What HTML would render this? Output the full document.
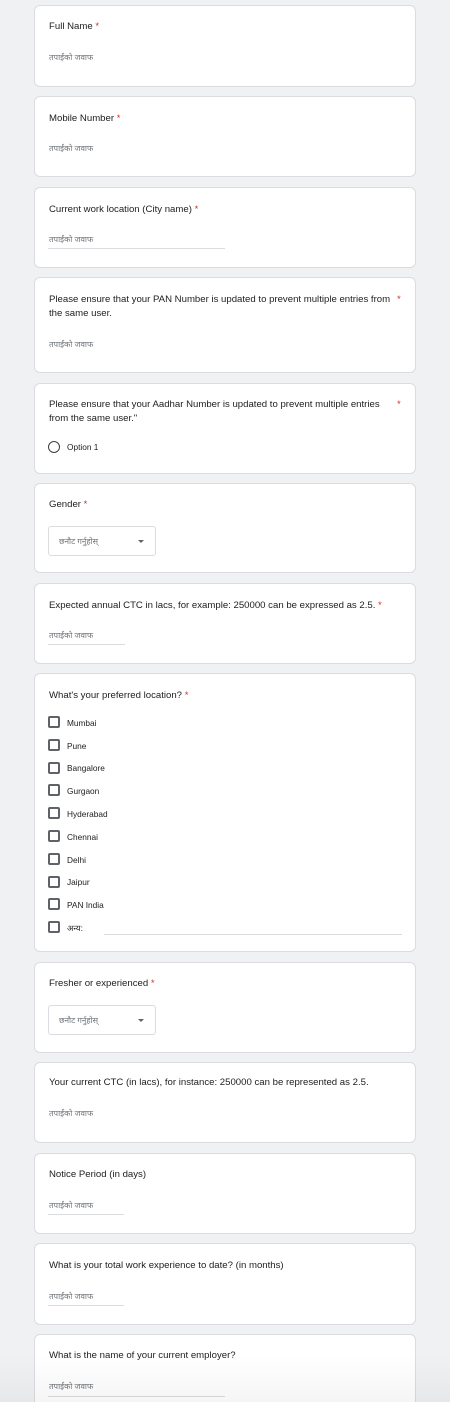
<!DOCTYPE html>
<html style="height:1402px;overflow:hidden"><head><meta charset="utf-8"><style>
*{margin:0;padding:0;box-sizing:border-box}
body{width:450px;height:1402px;background:#f0f1f3;position:relative;overflow:hidden;font-family:"Liberation Sans","Noto Sans CJK SC",sans-serif;color:#202124}
.c{position:absolute;left:34px;width:382px;background:#fff;border:1px solid #dadce0;border-radius:6px}
.t{position:absolute;left:49px;font-size:9.6px;line-height:14px;color:#202124;margin-top:1.5px}
.r{color:#d93025}
.p{position:absolute;left:49px;font-size:8px;color:#70757a;line-height:10px}
.u{position:absolute;left:48px;height:1px;background:#dadce0}
.cb{position:absolute;left:48px;width:12px;height:12px;border:2px solid #5f6368;border-radius:2px}
.o{position:absolute;left:67px;font-size:8.3px;color:#202124;line-height:10px}
.dd{position:absolute;left:48px;width:108px;height:30px;border:1px solid #dadce0;border-radius:3px}
.dd span{position:absolute;left:10px;top:9px;font-size:8px;color:#70757a}
.dd i{position:absolute;left:89px;top:13px;border-left:3px solid transparent;border-right:3px solid transparent;border-top:3px solid #5f6368}
</style></head><body>
<div class="c" style="top:5px;height:82px"></div>
<div class="t" style="top:18px">Full Name <span class="r">*</span></div>
<div class="p" style="top:53px">तपाईंको जवाफ</div>

<div class="c" style="top:96px;height:81px"></div>
<div class="t" style="top:110px">Mobile Number <span class="r">*</span></div>
<div class="p" style="top:144px">तपाईंको जवाफ</div>

<div class="c" style="top:187px;height:81px"></div>
<div class="t" style="top:201px">Current work location (City name) <span class="r">*</span></div>
<div class="p" style="top:235px">तपाईंको जवाफ</div>
<div class="u" style="top:248px;width:177px"></div>

<div class="c" style="top:277px;height:96px"></div>
<div class="t" style="top:291px;width:345px">Please ensure that your PAN Number is updated to prevent multiple entries from the same user.</div>
<div class="t r" style="top:291px;left:397px">*</div>
<div class="p" style="top:340px">तपाईंको जवाफ</div>

<div class="c" style="top:383px;height:91px"></div>
<div class="t" style="top:396px;width:340px">Please ensure that your Aadhar Number is updated to prevent multiple entries from the same user."</div>
<div class="t r" style="top:396px;left:397px">*</div>
<div style="position:absolute;left:48px;top:441px;width:12px;height:12px;border:1.5px solid #3c4043;border-radius:50%"></div>
<div class="o" style="top:442px">Option 1</div>

<div class="c" style="top:483px;height:90px"></div>
<div class="t" style="top:496px">Gender <span class="r">*</span></div>
<div class="dd" style="top:526px"><span>छनौट गर्नुहोस्</span><i></i></div>

<div class="c" style="top:583px;height:81px"></div>
<div class="t" style="top:597px">Expected annual CTC in lacs, for example: 250000 can be expressed as 2.5. <span class="r">*</span></div>
<div class="p" style="top:631px">तपाईंको जवाफ</div>
<div class="u" style="top:644px;width:77px"></div>

<div class="c" style="top:673px;height:279px"></div>
<div class="t" style="top:687px">What's your preferred location? <span class="r">*</span></div>
<div class="cb" style="top:716px"></div><div class="o" style="top:718px">Mumbai</div>
<div class="cb" style="top:739px"></div><div class="o" style="top:741px">Pune</div>
<div class="cb" style="top:762px"></div><div class="o" style="top:763px">Bangalore</div>
<div class="cb" style="top:784px"></div><div class="o" style="top:786px">Gurgaon</div>
<div class="cb" style="top:807px"></div><div class="o" style="top:809px">Hyderabad</div>
<div class="cb" style="top:830px"></div><div class="o" style="top:832px">Chennai</div>
<div class="cb" style="top:853px"></div><div class="o" style="top:855px">Delhi</div>
<div class="cb" style="top:876px"></div><div class="o" style="top:877px">Jaipur</div>
<div class="cb" style="top:898px"></div><div class="o" style="top:900px">PAN India</div>
<div class="cb" style="top:921px"></div><div class="o" style="top:923px">अन्य:</div>
<div class="u" style="top:934px;left:104px;width:298px"></div>

<div class="c" style="top:962px;height:91px"></div>
<div class="t" style="top:975px">Fresher or experienced <span class="r">*</span></div>
<div class="dd" style="top:1005px"><span>छनौट गर्नुहोस्</span><i></i></div>

<div class="c" style="top:1062px;height:81px"></div>
<div class="t" style="top:1074px">Your current CTC (in lacs), for instance: 250000 can be represented as 2.5.</div>
<div class="p" style="top:1109px">तपाईंको जवाफ</div>

<div class="c" style="top:1153px;height:81px"></div>
<div class="t" style="top:1166px">Notice Period (in days)</div>
<div class="p" style="top:1201px">तपाईंको जवाफ</div>
<div class="u" style="top:1214px;width:76px"></div>

<div class="c" style="top:1243px;height:82px"></div>
<div class="t" style="top:1257px">What is your total work experience to date? (in months)</div>
<div class="p" style="top:1292px">तपाईंको जवाफ</div>
<div class="u" style="top:1305px;width:76px"></div>

<div class="c" style="top:1334px;height:68px;border-bottom:none;border-radius:6px 6px 0 0"></div>
<div class="t" style="top:1347px">What is the name of your current employer?</div>
<div class="p" style="top:1382px">तपाईंको जवाफ</div>
<div class="u" style="top:1396px;width:177px"></div>
<div style="position:absolute;left:0;top:1355px;width:450px;height:47px;background:linear-gradient(rgba(0,0,0,0),rgba(0,0,0,0.04))"></div>
</body></html>
